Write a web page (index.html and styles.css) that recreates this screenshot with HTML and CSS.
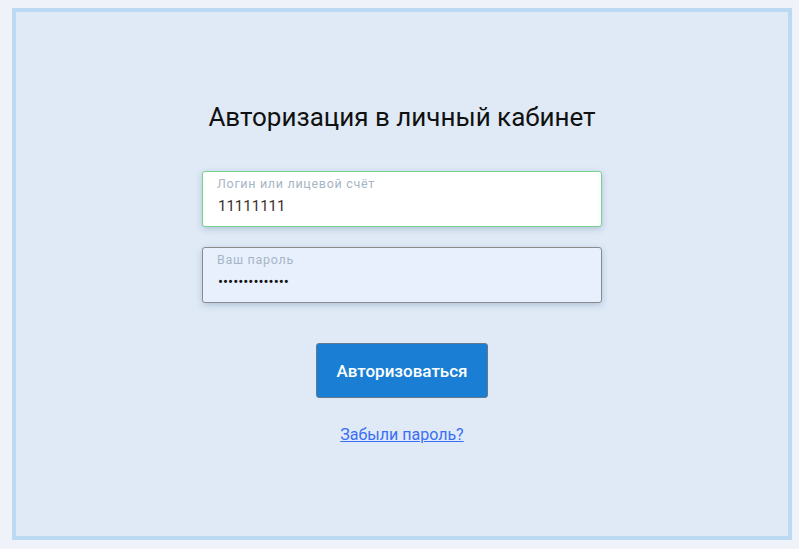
FILE: index.html
```html
<!DOCTYPE html>
<html lang="ru">
<head>
  <meta charset="UTF-8">
  <title>Авторизация</title>
  <link rel="stylesheet" href="styles.css">
</head>
<body>
  <div class="auth-box">
    <h1>Авторизация в личный кабинет</h1>
    <form class="auth-form">
      <label class="field field-ok">
        <span class="field-label">Логин или лицевой счёт</span>
        <input type="text" name="login" value="11111111">
      </label>
      <label class="field field-filled">
        <span class="field-label">Ваш пароль</span>
        <input type="password" name="password" value="12345678901234">
      </label>
      <button type="submit" class="auth-btn">Авторизоваться</button>
      <a href="#" class="forgot-link">Забыли пароль?</a>
    </form>
  </div>
</body>
</html>
```

FILE: styles.css
```css
html, body {
  height: 100%;
}

body {
  margin: 0;
  padding: 8px 7px 9px 12px;
  box-sizing: border-box;
  background: #eff3f9;
  font-family: Roboto, "Liberation Sans", sans-serif;
  color: #111;
}

.auth-box {
  box-sizing: border-box;
  height: 532px;
  background: #dfeaf6;
  border: 4px solid #bcd9f2;
  display: flex;
  flex-direction: column;
  align-items: center;
}

.auth-box h1 {
  margin: 90px 0 0;
  font-size: 26px;
  line-height: 30px;
  font-weight: 400;
  color: #111;
}

.auth-form {
  margin-top: 39px;
  display: flex;
  flex-direction: column;
  align-items: center;
}

.field {
  box-sizing: border-box;
  width: 400px;
  height: 56px;
  display: flex;
  flex-direction: column;
  padding: 4px 14px 0 14px;
  border: 1px solid #8a8a8a;
  border-radius: 3px;
  background: #e8f0fe;
  box-shadow: 0 2px 6px rgba(40, 80, 130, 0.25);
  margin-bottom: 20px;
}

.field-ok {
  background: #fff;
  border-color: #74d48c;
}

.field-label {
  font-size: 12.5px;
  line-height: 15px;
  letter-spacing: 0.7px;
  color: #a7b6c6;
}

.field input {
  border: none;
  outline: none;
  background: transparent;
  padding: 0 0 0 1px;
  margin-top: 5px;
  font-family: Roboto, "Liberation Sans", sans-serif;
  font-size: 15px;
  line-height: 20px;
  color: #3a3030;
}

.field input[type="password"] {
  margin-top: 5px;
  color: #111;
}

.auth-btn {
  margin-top: 20px;
  width: 172px;
  height: 55px;
  background: #1a7fd4;
  color: #fff;
  border: 1px solid #66798c;
  border-radius: 3px;
  font-family: Roboto, "Liberation Sans", sans-serif;
  font-size: 17px;
  font-weight: 500;
  cursor: pointer;
}

.forgot-link {
  margin-top: 27px;
  font-size: 16px;
  line-height: 20px;
  color: #3a6ef5;
  text-decoration: underline;
}
```
